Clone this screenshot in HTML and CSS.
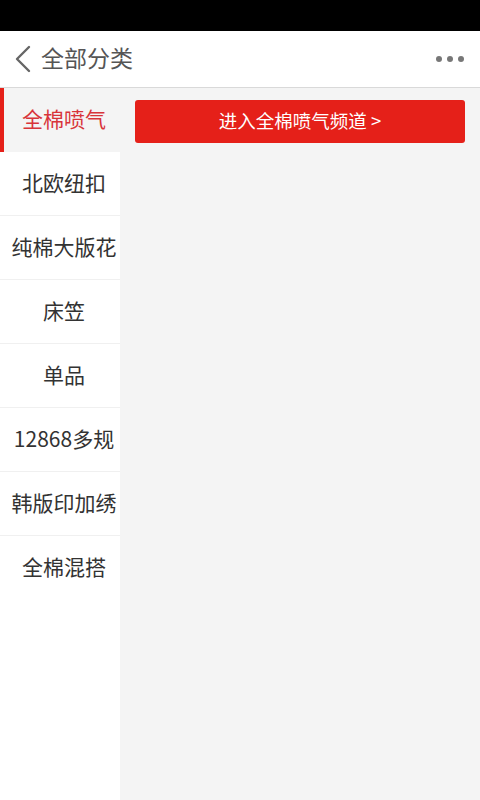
FILE: index.html
```html
<!DOCTYPE html>
<html lang="zh">
<head>
<meta charset="utf-8">
<title>全部分类</title>
<link rel="stylesheet" href="styles.css">
</head>
<body>
<div class="status"></div>
<header class="topbar">
  <div class="back">
    <svg width="18" height="28" viewBox="0 0 18 28"><polyline points="15,2 3,14 15,26" fill="none" stroke="#666" stroke-width="2.4" stroke-linecap="round" stroke-linejoin="round"/></svg>
  </div>
  <h1 class="title">全部分类</h1>
  <div class="more"><span></span><span></span><span></span></div>
</header>
<main class="body">
  <nav class="side">
    <div class="item active">全棉喷气</div>
    <div class="item">北欧纽扣</div>
    <div class="item">纯棉大版花</div>
    <div class="item">床笠</div>
    <div class="item">单品</div>
    <div class="item">12868多规</div>
    <div class="item">韩版印加绣</div>
    <div class="item last">全棉混搭</div>
  </nav>
  <section class="content">
    <a class="enter">进入全棉喷气频道 &gt;</a>
  </section>
</main>
</body>
</html>
```
FILE: styles.css
```css
* { box-sizing: border-box; }
html, body { margin: 0; padding: 0; height: 100%; }
body {
  font-family: "Noto Sans CJK SC", "Noto Sans", sans-serif;
  background: #fff;
  display: flex;
  flex-direction: column;
  width: 480px;
  height: 800px;
  overflow: hidden;
}
.status { height: 31px; background: #000; flex: none; }
.topbar {
  height: 57px;
  flex: none;
  display: flex;
  align-items: center;
  background: #fff;
  border-bottom: 1px solid #d9d9d9;
  padding: 0 16px 3px 14px;
}
.back { display: flex; align-items: center; width: 27px; margin-top: 2px; }
.title {
  margin: 0;
  font-size: 23px;
  font-weight: normal;
  color: #555;
  flex: 1;
  line-height: 1;
}
.more { display: flex; gap: 5px; align-items: center; margin-top: 2px; }
.more span { width: 6px; height: 6px; border-radius: 50%; background: #777; }
.body { flex: 1; display: flex; min-height: 0; }
.side { width: 120px; flex: none; background: #fff; }
.item {
  height: 64px;
  display: flex;
  align-items: center;
  justify-content: center;
  font-size: 21px;
  line-height: 1;
  color: #333;
  border-bottom: 1px solid #f0f0f0;
  padding: 0 0 3px 8px;
  white-space: nowrap;
}
.item.last { border-bottom: none; }
.item.active {
  background: #f4f4f4;
  color: #d8343a;
  border-left: 4px solid #e52019;
  border-bottom: none;
  padding-left: 4px;
}
.content { flex: 1; background: #f4f4f4; padding: 12px 15px; }
.enter {
  display: flex;
  align-items: center;
  justify-content: center;
  height: 43px;
  background: #e52019;
  color: #fff;
  border-radius: 3px;
  font-size: 18.5px;
  line-height: 1;
  padding-bottom: 3px;
}
```
